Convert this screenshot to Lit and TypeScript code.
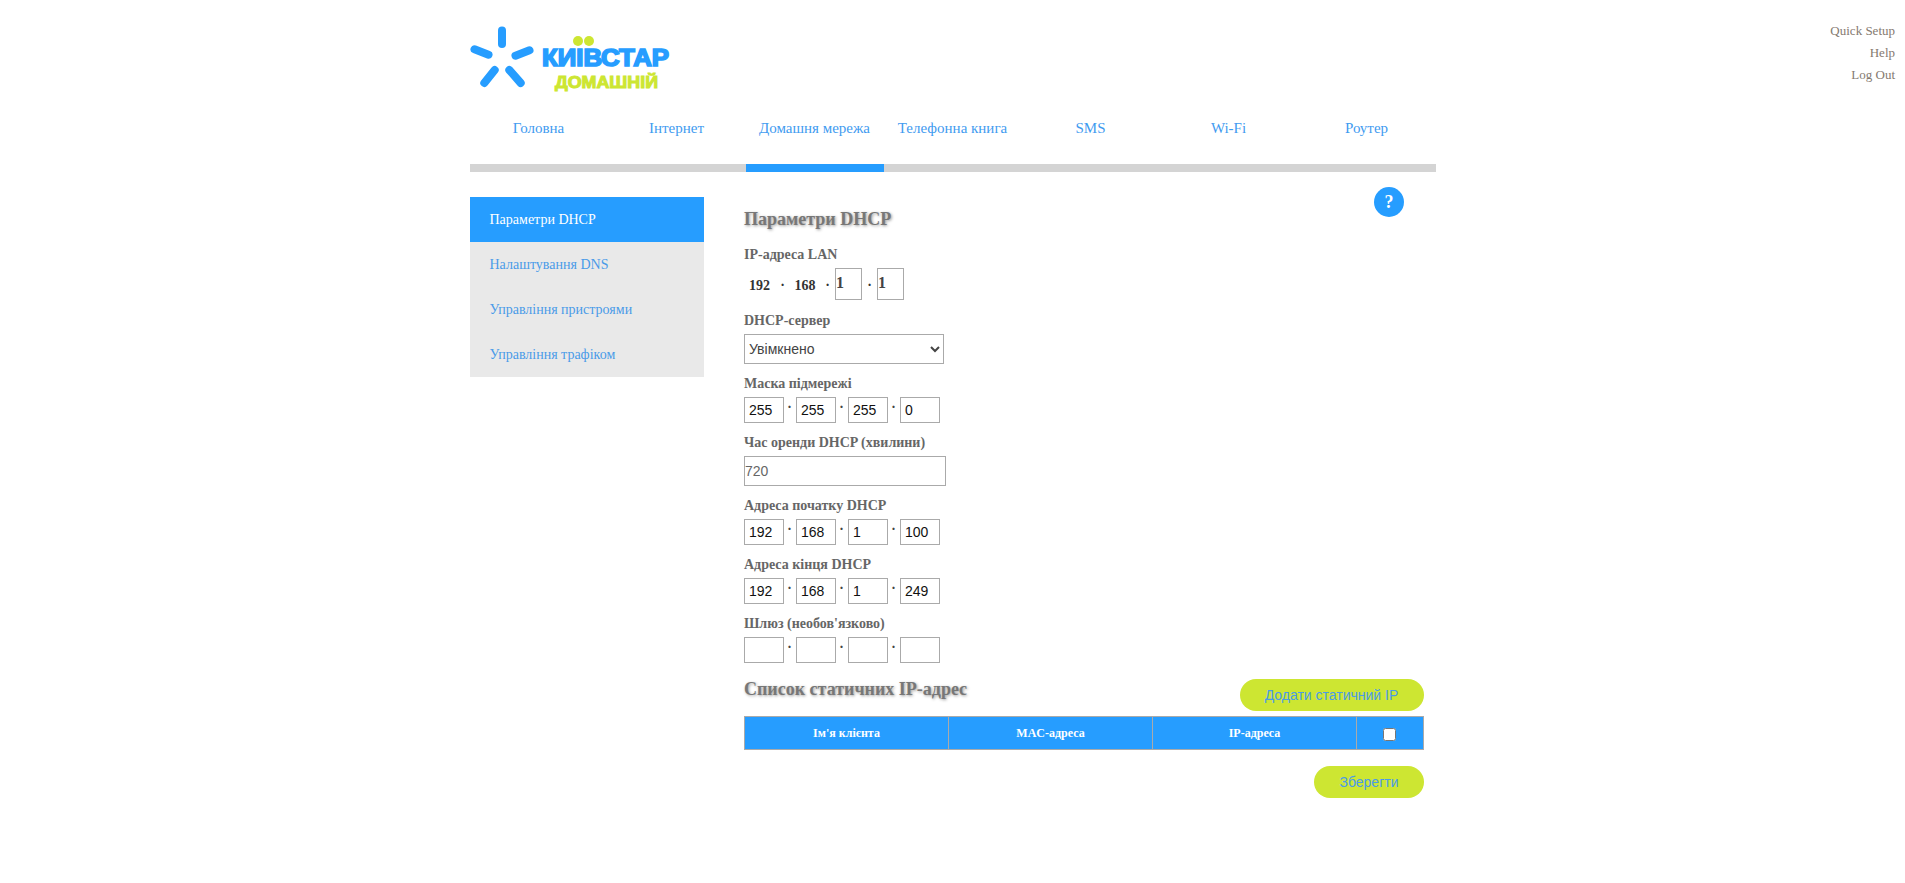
import { LitElement, html, css } from "lit";
import { customElement } from "lit/decorators.js";

const NAV = ["Головна", "Інтернет", "Домашня мережа", "Телефонна книга", "SMS", "Wi-Fi", "Роутер"];
const SIDE = ["Параметри DHCP", "Налаштування DNS", "Управління пристроями", "Управління трафіком"];
const COLS = ["Ім'я клієнта", "MAC-адреса", "IP-адреса"];

@customElement("app-root")
export class AppRoot extends LitElement {
  static styles = css`
    :host { display: block; height: 883px; background: #fff; font-family: "Liberation Serif", serif; color: #666; overflow: hidden; }
    .page { display: grid; grid-template-columns: 470px 966px 1fr; }
    .links { display: flex; flex-direction: column; align-items: flex-end; padding: 20px 10px 0 0; font-size: 13px; line-height: 22px; color: #857a70; }
    .logo { display: block; margin-top: 20px; width: 210px; height: 75px; }
    .logo text { font-family: "Liberation Sans", sans-serif; font-weight: 700; }
    .nav { display: grid; grid-template-columns: repeat(7, 138px); height: 69px; align-items: start; }
    .nav div { text-align: center; font-size: 15px; line-height: 20px; padding: 23px 1px 0 0; color: #3f9bf0; }
    .bar { display: grid; grid-template-columns: repeat(7, 138px); height: 8px; background: #d4d4d4; }
    .bar .on { grid-column: 3; background: #269dff; }
    .body { display: grid; grid-template-columns: 234px 1fr; column-gap: 40px; margin-top: 25px; }
    .side { height: 180px; background: #e9e9e9; }
    .side div { height: 45px; line-height: 45px; padding-left: 19.5px; font-size: 14px; color: #4a9be8; }
    .side .on { background: #269dff; color: #fff; }
    .main { position: relative; width: 680px; }
    .help { position: absolute; left: 630px; top: -10px; width: 30px; height: 30px; border-radius: 50%; background: #269dff; color: #fff; font: 700 18px/30px "Liberation Serif", serif; text-align: center; }
    h2 { margin: 0; font-size: 18px; line-height: 22px; font-weight: 700; color: #777; text-shadow: 1px 1px 3px #999; }
    .h1 { padding-top: 11px; }
    label { display: block; font-size: 14px; font-weight: 700; line-height: 16px; color: #666; }
    .f1 { margin-top: 17px; }
    .lan { display: flex; align-items: center; height: 32px; margin-top: 5px; font-size: 14px; font-weight: 700; color: #333; }
    .lan span { display: block; text-align: center; padding-top: 4px; }
    .lan .n1 { width: 31px; }
    .lan .n2 { width: 30px; }
    .lan .d { width: 15px; }
    .lan input { width: 27px; height: 32px; box-sizing: border-box; border: 1px solid #aaa; padding: 0 0 2px 0; font: 700 16px "Liberation Serif", serif; color: #444; background: #fff; border-radius: 0; }
    .f2 { margin-top: 13px; }
    select { display: block; width: 200px; height: 30px; margin-top: 5px; box-sizing: border-box; border: 1px solid #aaa; background: #fff; font: 14px "Liberation Sans", sans-serif; color: #444; padding-left: 0; border-radius: 0; }
    .f3 { margin-top: 12px; }
    .ip { display: flex; margin-top: 5px; height: 26px; }
    .ip input { width: 40px; height: 26px; box-sizing: border-box; border: 1px solid #aaa; padding: 0 0 0 4px; font: 14px "Liberation Sans", sans-serif; color: #111; background: #fff; border-radius: 0; }
    .ip span { width: 12px; box-sizing: border-box; padding-right: 1px; text-align: center; font-size: 14px; font-weight: 700; line-height: 13px; color: #444; }
    .lease { display: block; width: 202px; height: 30px; margin-top: 5px; box-sizing: border-box; border: 1px solid #aaa; padding: 0; font: 14px "Liberation Sans", sans-serif; color: #666; background: #fff; border-radius: 0; }
    .head2 { display: flex; justify-content: space-between; align-items: flex-start; margin-top: 16px; height: 37px; }
    .head2 h2 { margin-top: -1px; }
    .pill { height: 32px; border-radius: 16px; background: #cde632; color: #4a9be8; font: 14px/32px "Liberation Sans", sans-serif; text-align: center; }
    .add { width: 184px; padding-right: 1px; box-sizing: border-box; }
    table { width: 680px; border-collapse: separate; border-spacing: 0; table-layout: fixed; }
    th { border: 1px solid #aaa; border-width: 1px 0 1px 1px; background: #269dff; color: #fff; font-size: 12px; font-weight: 700; padding: 0; height: 32px; }
    th:last-child { border-right-width: 1px; }
    th input { margin: 2px 2px 0 0; width: 13px; height: 13px; vertical-align: middle; }
    .foot { display: flex; justify-content: flex-end; margin-top: 16px; }
    .save { width: 110px; }
  `;

  private ip(vals: string[]) {
    return html`<div class="ip">${vals.map((v, i) => html`<input .value=${v} />${i < 3 ? html`<span>.</span>` : ""}`)}</div>`;
  }

  render() {
    return html`
      <div class="page">
        <div></div>
        <div>
          <svg class="logo" viewBox="470 20 210 75" aria-label="Київстар Домашній">
            <g stroke="#269dff" stroke-width="8" stroke-linecap="round" fill="none">
              <path d="M502 30.5V44" />
              <path d="M474.5 49.3L488.5 54.7" />
              <path d="M515.5 55.7L529.5 50.3" />
              <path d="M494.7 70L484.3 83" />
              <path d="M509.3 70L520.7 83" />
            </g>
            <circle cx="578" cy="41" r="5" fill="#cde632" />
            <circle cx="589" cy="41" r="5" fill="#cde632" />
            <text x="542" y="65.5" font-size="23" fill="#269dff" stroke="#269dff" stroke-width="1.6" textLength="127" lengthAdjust="spacingAndGlyphs">КИІВСТАР</text>
            <text x="555" y="87.5" font-size="16" fill="#cde632" stroke="#cde632" stroke-width="1" textLength="103" lengthAdjust="spacingAndGlyphs">ДОМАШНІЙ</text>
          </svg>
          <div class="nav">${NAV.map((n) => html`<div>${n}</div>`)}</div>
          <div class="bar"><div class="on"></div></div>
          <div class="body">
            <div class="side">${SIDE.map((s, i) => html`<div class=${i === 0 ? "on" : ""}>${s}</div>`)}</div>
            <div class="main">
              <div class="help">?</div>
              <h2 class="h1">Параметри DHCP</h2>
              <label class="f1">IP-адреса LAN</label>
              <div class="lan">
                <span class="n1">192</span><span class="d">·</span><span class="n2">168</span><span class="d">·</span>
                <input .value=${"1"} /><span class="d">·</span><input .value=${"1"} />
              </div>
              <label class="f2">DHCP-сервер</label>
              <select><option>Увімкнено</option></select>
              <label class="f3">Маска підмережі</label>
              ${this.ip(["255", "255", "255", "0"])}
              <label class="f3">Час оренди DHCP (хвилини)</label>
              <input class="lease" .value=${"720"} />
              <label class="f3">Адреса початку DHCP</label>
              ${this.ip(["192", "168", "1", "100"])}
              <label class="f3">Адреса кінця DHCP</label>
              ${this.ip(["192", "168", "1", "249"])}
              <label class="f3">Шлюз (необов'язково)</label>
              ${this.ip(["", "", "", ""])}
              <div class="head2">
                <h2>Список статичних IP-адрес</h2>
                <div class="pill add">Додати статичний IP</div>
              </div>
              <table>
                <colgroup><col style="width:204px" /><col style="width:204px" /><col style="width:204px" /><col style="width:68px" /></colgroup>
                <tr>${COLS.map((c) => html`<th>${c}</th>`)}<th><input type="checkbox" /></th></tr>
              </table>
              <div class="foot"><div class="pill save">Зберегти</div></div>
            </div>
          </div>
        </div>
        <div class="links"><div>Quick Setup</div><div>Help</div><div>Log Out</div></div>
      </div>
    `;
  }
}
